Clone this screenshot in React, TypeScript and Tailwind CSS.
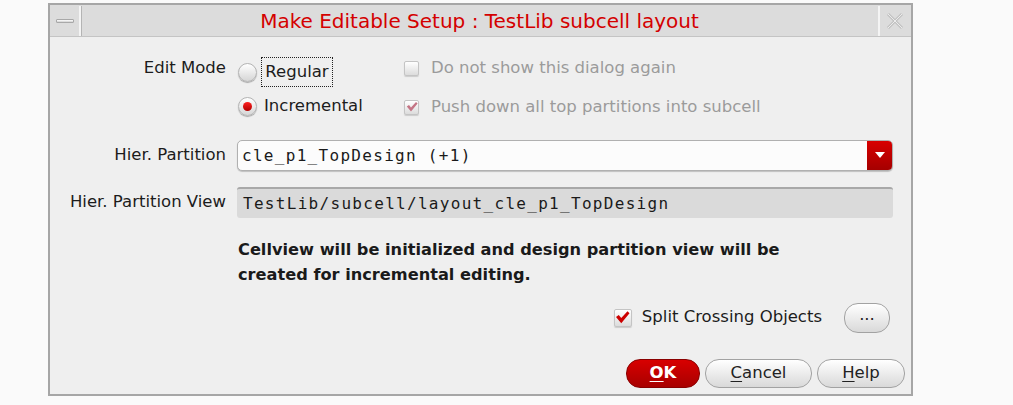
import type { ReactNode } from 'react';

const sans = { fontFamily: '"DejaVu Sans", "Noto Sans", sans-serif' };
const mono = { fontFamily: '"DejaVu Sans Mono", "Liberation Mono", monospace' };

function Radio({ checked }: { checked?: boolean }) {
    return (
        <span className="flex h-[19px] w-[19px] shrink-0 items-center justify-center rounded-full border border-[#b4b4b4] bg-gradient-to-b from-[#ffffff] to-[#d6d6d6] shadow-[0_1px_1px_rgba(0,0,0,0.3)]">
            {checked && <span className="h-[9px] w-[9px] rounded-full bg-gradient-to-b from-[#ff2020] to-[#b00000]" />}
        </span>
    );
}

function Check({ checked, disabled, size = 15 }: { checked?: boolean; disabled?: boolean; size?: number }) {
    const color = disabled ? '#c47585' : '#cc0000';
    return (
        <span
            className="flex shrink-0 items-center justify-center rounded-[2px] border border-[#c4c4c4] bg-gradient-to-b from-[#ffffff] to-[#dcdcdc] shadow-[0_1px_1px_rgba(0,0,0,0.15)]"
            style={{ width: size, height: size }}
        >
            {checked && (
                <svg width={size - 3} height={size - 3} viewBox="0 0 12 12">
                    <path d="M0.8 5.6 L3 4 L5 6.4 L10 1 L11.6 2.6 L5 10.6 Z" fill={color} />
                </svg>
            )}
        </span>
    );
}

function PillButton({ children, className = '', red }: { children: ReactNode; className?: string; red?: boolean }) {
    return (
        <div
            className={
                'flex h-[29px] items-center justify-center rounded-[14px] border text-[16.5px] ' +
                (red
                    ? 'border-[#8a0000] bg-gradient-to-b from-[#d80000] to-[#a80000] font-bold text-white '
                    : 'border-[#a2a2a2] bg-gradient-to-b from-[#ffffff] to-[#d9d9d9] text-[#222] ') +
                className
            }
        >
            {children}
        </div>
    );
}

export default function App() {
    return (
        <div className="h-[405px] w-[1013px] bg-[#fafafa] pl-[48px] pt-[3px]" style={sans}>
            <div className="flex h-[393px] w-[865px] flex-col border-2 border-[#a6a6a6] bg-[#efefef]">
                {/* Title bar */}
                <div className="flex h-[32px] gap-[1px] border-b border-[#c4c4c4] bg-[#dcdcdc] pt-[1px]">
                    <div className="flex w-[31px] items-center justify-center border-r-2 border-[#f4f4f4] shadow-[1px_0_0_#b4b4b4]">
                        <span className="h-[4px] w-[18px] rounded-[1px] border border-[#a8a8a8] bg-gradient-to-b from-[#ffffff] to-[#d0d0d0]" />
                    </div>
                    <div className="flex flex-1 items-center justify-center text-[20px] text-[#d40000]">
                        Make Editable Setup : TestLib subcell layout
                    </div>
                    <div className="mr-[2px] flex w-[31px] items-center justify-center border-l-2 border-[#f4f4f4]">
                        <svg width="20" height="20" viewBox="0 0 20 20">
                            <path d="M3 3 L17 17 M17 3 L3 17" stroke="#c2c2c2" strokeWidth="3" />
                            <path d="M3 3 L17 17 M17 3 L3 17" stroke="#ececec" strokeWidth="1" />
                        </svg>
                    </div>
                </div>

                {/* Body */}
                <div className="flex flex-col pr-[18px] text-[16.5px] text-[#1c1c1c]">
                    {/* Edit mode */}
                    <div className="mt-[20px] flex h-[30px] items-start leading-[20px]">
                        <div className="w-[176px] pt-[1px] text-right">Edit Mode</div>
                        <div className="ml-[12px] flex w-[166px] items-start">
                            <span className="pt-[6px]">
                                <Radio />
                            </span>
                            <div className="ml-[4px] flex h-[30px] w-[72px] items-center justify-center border border-dotted border-[#222]">
                                Regular
                            </div>
                        </div>
                        <div className="flex items-center gap-[12px] pt-[1px] text-[#9b9b9b]">
                            <Check />
                            <span>Do not show this dialog again</span>
                        </div>
                    </div>
                    <div className="mt-[4px] flex h-[30px] items-center leading-[20px]">
                        <div className="ml-[188px] flex w-[166px] items-center gap-[7px]">
                            <Radio checked />
                            <span>Incremental</span>
                        </div>
                        <div className="flex items-center gap-[12px] pt-[2px] text-[#9b9b9b]">
                            <Check checked disabled />
                            <span>Push down all top partitions into subcell</span>
                        </div>
                    </div>

                    {/* Hier. Partition */}
                    <div className="mt-[19px] flex h-[31px] items-center">
                        <div className="w-[176px] text-right">Hier. Partition</div>
                        <div className="ml-[11px] flex h-[31px] flex-1 overflow-hidden rounded-[5px] border border-[#b0b0b0] bg-[#fcfcfc] shadow-[0_1px_1px_rgba(0,0,0,0.2)]">
                            <div className="flex flex-1 items-center pl-[4px] text-[16px] tracking-[1.3px] text-[#1a1a1a]" style={mono}>
                                cle_p1_TopDesign (+1)
                            </div>
                            <div className="flex w-[25px] items-center justify-center bg-gradient-to-b from-[#d80000] to-[#a50000]">
                                <svg width="10" height="7" viewBox="0 0 10 7">
                                    <path d="M0 0 L10 0 L5 6 Z" fill="#ffffff" />
                                </svg>
                            </div>
                        </div>
                    </div>

                    {/* Hier. Partition View */}
                    <div className="mt-[16px] flex h-[31px] items-center">
                        <div className="w-[176px] text-right">Hier. Partition View</div>
                        <div className="ml-[11px] flex h-[31px] flex-1 items-center rounded-[3px] border-t-2 border-[#a8a8a8] bg-[#dadada] pl-[6px] text-[16px] tracking-[1.3px] text-[#1a1a1a]" style={mono}>
                            TestLib/subcell/layout_cle_p1_TopDesign
                        </div>
                    </div>

                    {/* Info text */}
                    <div className="ml-[188px] mt-[19px] text-[16.2px] font-bold leading-[25px] text-[#1a1a1a]">
                        <div>Cellview will be initialized and design partition view will be</div>
                        <div>created for incremental editing.</div>
                    </div>

                    {/* Split crossing */}
                    <div className="mt-[15px] flex h-[31px] items-center justify-end">
                        <Check checked size={18} />
                        <span className="ml-[10px]">Split Crossing Objects</span>
                        <PillButton className="ml-[22px] mr-[3px] h-[30px] w-[46px] pb-[4px] text-[13px]">...</PillButton>
                    </div>
                </div>

                {/* Buttons */}
                <div className="mt-[26px] flex justify-end gap-[5px] pr-[6px]">
                    <PillButton red className="w-[74px]">
                        <span className="underline underline-offset-[3px]">O</span>K
                    </PillButton>
                    <PillButton className="w-[107px]">
                        <span className="underline underline-offset-[3px]">C</span>ancel
                    </PillButton>
                    <PillButton className="w-[88px]">
                        <span className="underline underline-offset-[3px]">H</span>elp
                    </PillButton>
                </div>
            </div>
        </div>
    );
}
